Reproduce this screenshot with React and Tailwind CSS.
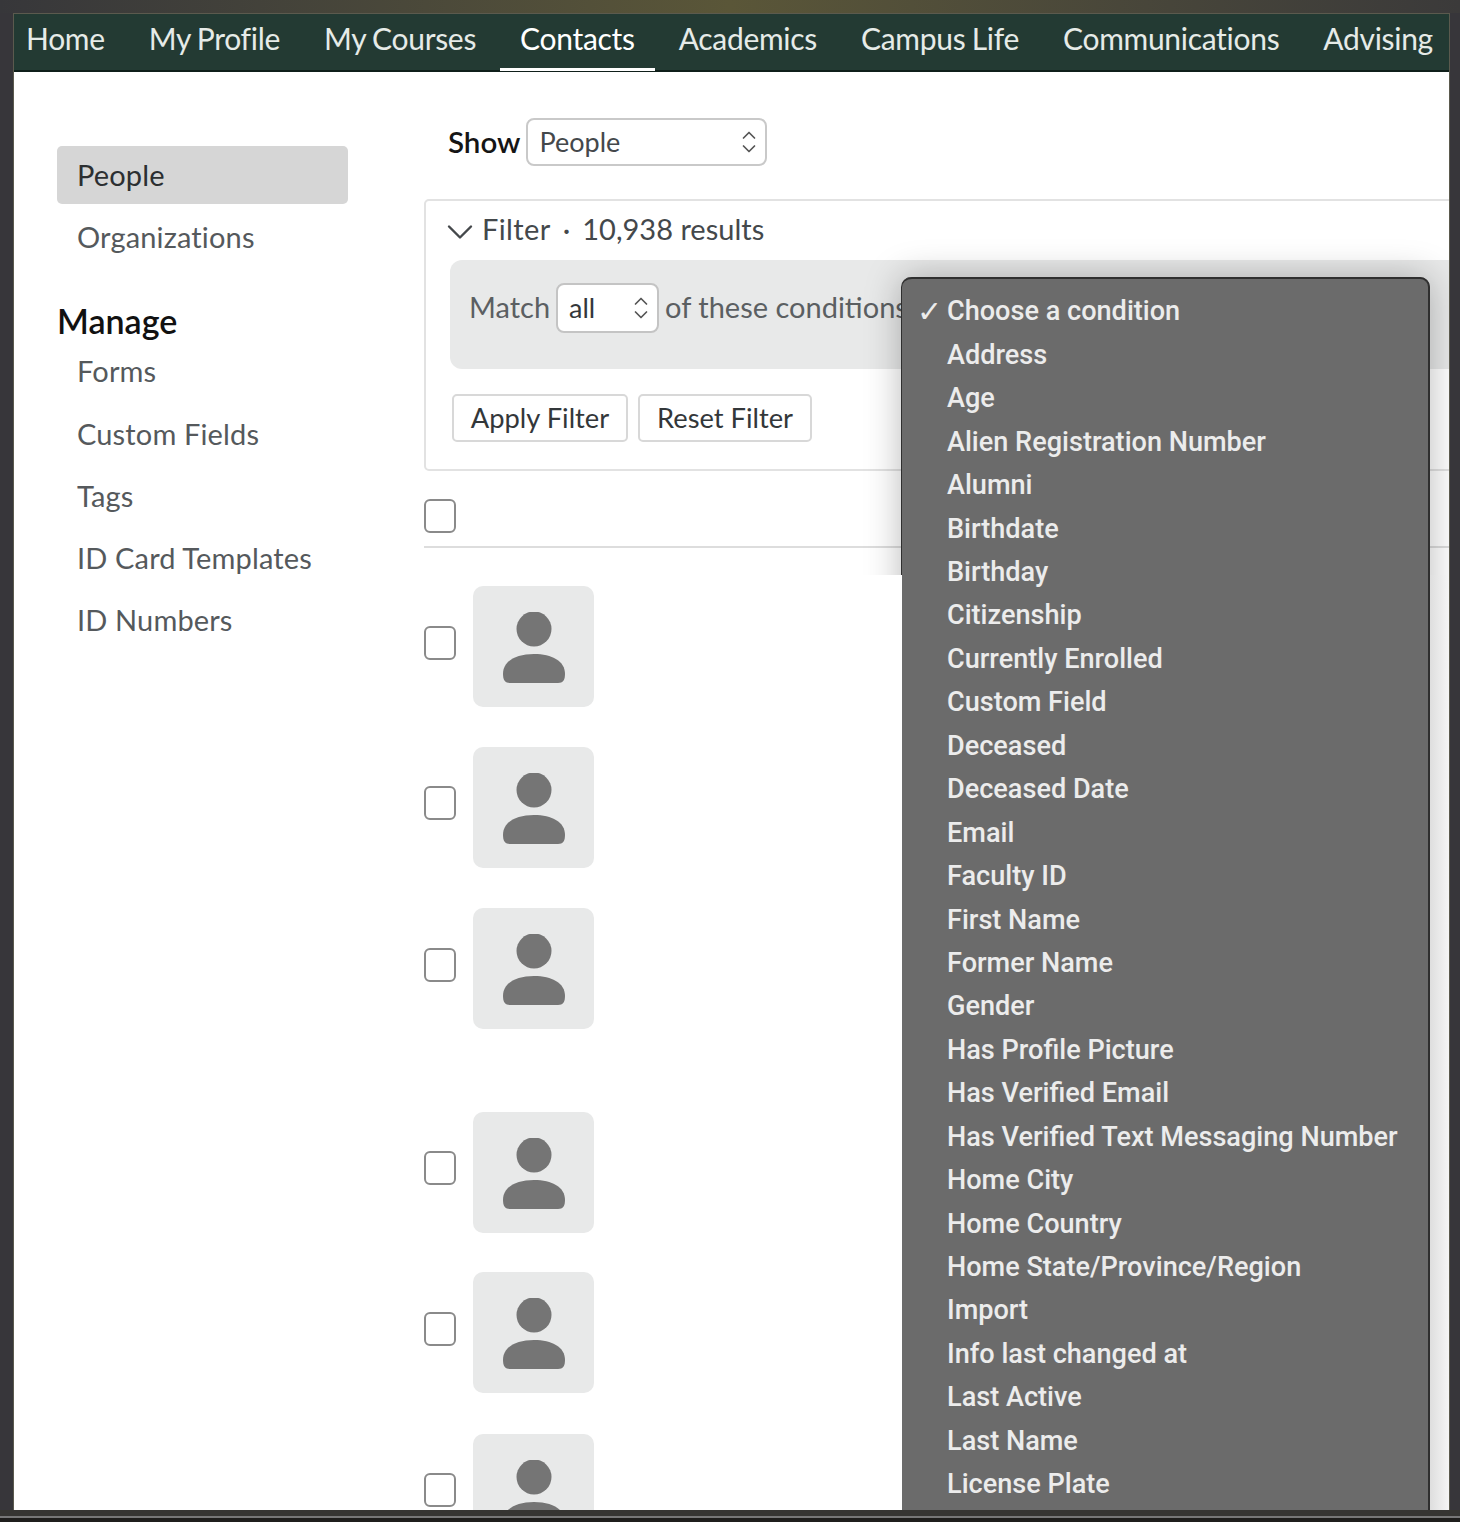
import React from 'react';

const navItems = [
  { label: 'Home', active: false },
  { label: 'My Profile', active: false },
  { label: 'My Courses', active: false },
  { label: 'Contacts', active: true },
  { label: 'Academics', active: false },
  { label: 'Campus Life', active: false },
  { label: 'Communications', active: false },
  { label: 'Advising', active: false },
];

const manageItems = ['Forms', 'Custom Fields', 'Tags', 'ID Card Templates', 'ID Numbers'];

const conditions = [
  'Address',
  'Age',
  'Alien Registration Number',
  'Alumni',
  'Birthdate',
  'Birthday',
  'Citizenship',
  'Currently Enrolled',
  'Custom Field',
  'Deceased',
  'Deceased Date',
  'Email',
  'Faculty ID',
  'First Name',
  'Former Name',
  'Gender',
  'Has Profile Picture',
  'Has Verified Email',
  'Has Verified Text Messaging Number',
  'Home City',
  'Home Country',
  'Home State/Province/Region',
  'Import',
  'Info last changed at',
  'Last Active',
  'Last Name',
  'License Plate',
];

const rows = [
  { mt: 'mt-[38px]', check: 'mt-[40px]' },
  { mt: 'mt-[40px]', check: 'mt-[39px]' },
  { mt: 'mt-[40px]', check: 'mt-[40px]' },
  { mt: 'mt-[83px]', check: 'mt-[39px]' },
  { mt: 'mt-[39px]', check: 'mt-[40px]' },
  { mt: 'mt-[41px]', check: 'mt-[39px]' },
];

function Stepper() {
  return (
    <svg width="14" height="24" viewBox="0 0 14 24" fill="none" stroke="#555555" strokeWidth="1.7" strokeLinecap="round" strokeLinejoin="round">
      <path d="M1.5 8L7 2.5L12.5 8" />
      <path d="M1.5 16L7 21.5L12.5 16" />
    </svg>
  );
}

function PersonIcon() {
  return (
    <svg width="62" height="72" viewBox="0 0 62 72" fill="#757575">
      <circle cx="31" cy="17" r="17.5" />
      <path d="M0 62c0-13 13-20 31-20s31 7 31 20c0 6-2 9-7 9H7c-5 0-7-3-7-9z" />
    </svg>
  );
}

function Checkbox() {
  return <div className="w-[32px] h-[34px] shrink-0 rounded-[6px] border-2 border-[#8a8a8a] bg-white" />;
}

function App() {
  return (
    <div className="w-[1460px] h-[1522px] overflow-hidden flex flex-col bg-[#37363a] font-['Lato','Noto_Sans',sans-serif]">
      <div className="h-[13px] shrink-0 bg-gradient-to-r from-[#37373a] via-[#5a5638] to-[#3b3a3a]" />

      <div className="h-[1497px] shrink-0 ml-[13px] mr-[10px] border border-[#5b5a4e] border-b-0 bg-white overflow-hidden relative">
        <nav className="h-[58px] bg-[#233a33] border-b-2 border-[#0f1f1a] flex pl-[12px] text-[30px] tracking-[-0.3px] [word-spacing:-1px] whitespace-nowrap text-[#e6ebe8]">
          {navItems.map((item) => (
            <div
              key={item.label}
              className={
                item.active
                  ? 'h-[57px] shrink-0 -ml-[20px] px-[20px] mr-[24px] flex items-center pb-[5px] text-white border-b-[3px] border-white'
                  : 'h-[57px] shrink-0 mr-[44px] flex items-center pb-[8px]'
              }
            >
              {item.label}
            </div>
          ))}
        </nav>

        <div className="flex">
          <aside className="w-[410px] shrink-0 pl-[43px] pt-[74px] text-[29px] tracking-[0.15px] text-[#55595c]">
            <div className="w-[291px] h-[58px] rounded-[5px] bg-[#d6d6d6] pl-[20px] flex items-center text-[#2c2f31]">
              People
            </div>
            <div className="h-[62px] pl-[20px] mt-[2px] flex items-center">Organizations</div>
            <h2 className="mt-[33px] h-[39px] flex items-center text-[34px] font-semibold tracking-normal text-[#111111]">
              Manage
            </h2>
            <div>
              {manageItems.map((item) => (
                <div key={item} className="h-[62.2px] pl-[20px] flex items-center">
                  {item}
                </div>
              ))}
            </div>
          </aside>

          <main className="flex-1 min-w-0">
            <div className="h-[127px] pt-[46px] pl-[24px] flex items-start">
              <span className="h-[48px] flex items-center text-[29.5px] font-semibold text-[#151515]">Show</span>
              <div className="w-[241px] h-[48px] ml-[6px] pl-[11px] pr-[9px] rounded-[8px] border-2 border-[#c9c9c9] bg-white flex items-center justify-between text-[27px] text-[#44484b]">
                People
                <Stepper />
              </div>
            </div>

            <section className="h-[272px] w-[1100px] rounded-[5px] border-2 border-[#e2e2e2]">
              <div className="h-[59px] pl-[21px] pb-[4px] flex items-center text-[29px] text-[#44484b]">
                <svg width="26" height="16" viewBox="0 0 26 16" fill="none" stroke="#44484b" strokeWidth="2.4" strokeLinecap="round" strokeLinejoin="round" className="mr-[9px] mt-[6px]">
                  <path d="M2 2.5L13 13.5L24 2.5" />
                </svg>
                <span className="tracking-[0.4px]">Filter</span>
                <span className="mx-[12px]">·</span>
                <span>10,938 results</span>
              </div>
              <div className="h-[109px] ml-[24px] rounded-[12px] bg-[#e8e9e9] pl-[19px] pt-[23px] flex items-start text-[29px] text-[#5b5f62]">
                <span className="h-[48px] flex items-center">Match</span>
                <div className="w-[103px] h-[50px] ml-[6px] pl-[11px] pr-[9px] rounded-[8px] border-2 border-[#c4c4c4] bg-white flex items-center justify-between text-[27px] text-[#33373a]">
                  all
                  <Stepper />
                </div>
                <span className="h-[48px] ml-[6px] flex items-center whitespace-nowrap">of these conditions</span>
              </div>
              <div className="mt-[25px] ml-[26px] flex gap-[10px] text-[27.3px] text-[#33373a]">
                <button className="w-[176px] h-[48px] rounded-[5px] border-2 border-[#d8d8d8] bg-white">Apply Filter</button>
                <button className="w-[174px] h-[48px] rounded-[5px] border-2 border-[#d8d8d8] bg-white">Reset Filter</button>
              </div>
            </section>

            <div className="h-[77px] w-[1100px] pt-[28px] border-b-2 border-[#dddddd]">
              <Checkbox />
            </div>

            {rows.map((row, i) => (
              <div key={i} className={`${row.mt} flex items-start`}>
                <div className={row.check}>
                  <Checkbox />
                </div>
                <div className="w-[121px] h-[121px] ml-[17px] rounded-[10px] bg-[#e8e9e9] flex justify-center pt-[26px]">
                  <PersonIcon />
                </div>
              </div>
            ))}
          </main>
        </div>

        {/* the menu's shadow and left edge stop part way down, as in the capture */}
        <div className="absolute left-[837px] top-[213px] w-[598px] h-[348px] overflow-hidden">
          <div className="ml-[50px] mt-[50px] w-[529px] h-[400px] rounded-t-[10px] border-l-2 border-[#2f2f2f] bg-[#6b6b6b] shadow-[0_0_36px_rgba(0,0,0,0.28)]" />
        </div>
        <div className="absolute left-[1416px] top-[561px] w-[19px] h-[960px] bg-gradient-to-r from-[#dedede] to-[#f6f6f6]" />

        <div className="absolute left-[888px] top-[263px] w-[528px] h-[1300px] rounded-t-[10px] border-t-2 border-r-2 border-[#2f2f2f] bg-[#6b6b6b] pt-[11px] text-[27.1px] font-['Roboto','Noto_Sans',sans-serif] font-medium text-[#ececec]">
          <div className="h-[43.45px] flex items-center pl-[15px]">
            <span className="w-[30px] text-[30px] leading-none">✓</span>
            Choose a condition
          </div>
          {conditions.map((c) => (
            <div key={c} className="h-[43.45px] flex items-center pl-[45px] whitespace-nowrap">
              {c}
            </div>
          ))}
        </div>
      </div>

      <div className="h-[6px] shrink-0 bg-[#363532]" />
      <div className="h-[2px] shrink-0 bg-[#777777]" />
      <div className="flex-1 bg-[#1f1e1c]" />
    </div>
  );
}

export default App;
